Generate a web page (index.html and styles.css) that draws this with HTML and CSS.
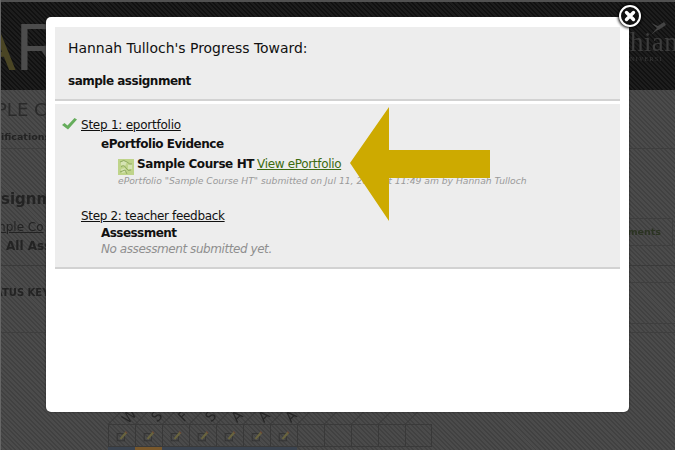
FILE: index.html
```html
<!DOCTYPE html>
<html lang="en">
<head>
<meta charset="utf-8">
<title>Progress</title>
<link rel="stylesheet" href="styles.css">
</head>
<body>
<div class="page">
  <header class="banner">
    <div class="logo-left"><span class="logo-a">A</span><span>R</span></div>
    <div class="logo-right">
      <svg class="bird" width="16" height="16" viewBox="0 0 16 16"><path d="M1 15 L7 8 L1 3 L8 6 L14 2 L16 5 L10 9 L6 11 Z" fill="#444"/></svg>
      <div class="logo-name">hian</div>
      <div class="logo-sub">NIVERSI</div>
    </div>
  </header>
  <main class="content">
    <div class="course-title">PLE C</div>
    <div class="notif">ifications</div>
    <div class="assign">signm</div>
    <div class="assign-row">
      <div>
        <div class="link-bg">mple Co</div>
        <div class="all">All Ass</div>
      </div>
      <div class="comments"><span>mments</span></div>
    </div>
    <div class="status-row">
      <div class="status">ATUS KEY</div>
      <div class="status-side"></div>
    </div>
    <div class="grid-wrap">
      <div class="hcell"><span>W</span></div>
      <div class="hcell"><span>S</span></div>
      <div class="hcell"><span>F</span></div>
      <div class="hcell"><span>S</span></div>
      <div class="hcell"><span>A</span></div>
      <div class="hcell"><span>A</span></div>
      <div class="hcell"><span>A</span></div>
      <div class="hcell"></div>
      <div class="hcell"></div>
      <div class="hcell"></div>
      <div class="hcell"></div>
      <div class="hcell"></div>
      <div class="cell"><svg class="pencil" viewBox="0 0 10 10"><use href="#p"/></svg></div>
      <div class="cell"><svg class="pencil" viewBox="0 0 10 10"><use href="#p"/></svg></div>
      <div class="cell"><svg class="pencil" viewBox="0 0 10 10"><use href="#p"/></svg></div>
      <div class="cell"><svg class="pencil" viewBox="0 0 10 10"><use href="#p"/></svg></div>
      <div class="cell"><svg class="pencil" viewBox="0 0 10 10"><use href="#p"/></svg></div>
      <div class="cell"><svg class="pencil" viewBox="0 0 10 10"><use href="#p"/></svg></div>
      <div class="cell"><svg class="pencil" viewBox="0 0 10 10"><use href="#p"/></svg></div>
      <div class="cell"></div>
      <div class="cell"></div>
      <div class="cell"></div>
      <div class="cell"></div>
      <div class="cell"></div>
      <div class="bar"></div><div class="bar orange"></div><div class="bar"></div><div class="bar"></div><div class="bar"></div><div class="bar"></div><div class="bar"></div>
    </div>
  </main>
  <svg class="defs" width="0" height="0"><defs><g id="p"><rect x="1" y="3" width="6" height="6" fill="none" stroke="#333" stroke-width=".8"/><path d="M3 7 L8 1 L9.5 2.5 L4.5 8 Z" fill="#69643f"/><path d="M7.5 1.5 L8 1 L9.5 2.5 L9 3 Z" fill="#6b3a30"/></g></defs></svg>
</div>

<div class="modal">
  <section class="panel head">
    <h1>Hannah Tulloch's Progress Toward:</h1>
    <h2>sample assignment</h2>
  </section>
  <section class="panel steps">
    <div class="step">
      <svg class="check" width="17" height="13" viewBox="0 0 17 13"><path d="M1 8 L3.5 6 L6.5 8.5 L13.5 1 L16 2.5 L7 12.5 Z" fill="#66ad5c"/></svg>
      <a class="step-link">Step 1: eportfolio</a>
    </div>
    <div class="sub">ePortfolio Evidence</div>
    <div class="evidence">
      <svg class="thumb" width="16" height="16" viewBox="0 0 16 16">
        <rect width="16" height="16" fill="#bfd48a"/>
        <path d="M3 3 Q6 1 9 3 L7 7 L3 6 Z M10 6 L14 5 L14 10 L10 10 Z M3 10 L7 9 L8 13 L4 14 Z" fill="#d6e3b4"/>
        <path d="M2 3 Q6 0 9 3 T14 5 M3 8 Q6 5 8 9 T13 11 M2 13 L7 11 L9 15" fill="none" stroke="#8fa962" stroke-width="1"/>
      </svg>
      <strong>Sample Course HT</strong>
      <a class="view">View ePortfolio</a>
    </div>
    <div class="meta">ePortfolio "Sample Course HT" submitted on Jul 11, 2017 at 11:49 am by Hannah Tulloch</div>
    <div class="step step-two"><a class="step-link">Step 2: teacher feedback</a></div>
    <div class="sub sub-two">Assessment</div>
    <div class="none-yet">No assessment submitted yet.</div>
  </section>
</div>

<svg class="arrow" width="140" height="114" viewBox="0 0 140 114"><path d="M0 56 L39 0 L39 43 L140 43 L140 71 L39 71 L39 114 Z" fill="#cdaa00"/></svg>

<button class="close" aria-label="Close">
  <svg width="14" height="14" viewBox="0 0 14 14"><path d="M3.5 3.5 L10.5 10.5 M10.5 3.5 L3.5 10.5" stroke="#fff" stroke-width="3.4" stroke-linecap="round"/></svg>
</button>
</body>
</html>
```

FILE: styles.css
```css
* { box-sizing: border-box; }
html, body { margin: 0; padding: 0; }
body {
  width: 675px;
  height: 450px;
  overflow: hidden;
  position: relative;
  background: #474747;
  font-family: "DejaVu Sans", Verdana, sans-serif;
}
.page {
  height: 450px;
  border-left: 1px solid #666;
  background:
    repeating-linear-gradient(45deg, #414141 0, #414141 1.4px, #4b4b4b 1.4px, #4b4b4b 3.2px);
  overflow: hidden;
  filter: blur(.4px);
}
.banner {
  height: 90px;
  border-top: 2px solid #505050;
  background:
    repeating-linear-gradient(45deg, #111 0, #111 1.4px, #1d1d1d 1.4px, #1d1d1d 3.2px);
  display: flex;
  justify-content: space-between;
}
.logo-left {
  font: 67px/1 "Liberation Sans", sans-serif;
  color: #4c4c4c;
  padding-top: 11px;
  margin-left: -30px;
  white-space: nowrap;
}
.logo-a { color: #4a4524; }
.logo-right {
  width: 45px;
  padding-top: 18px;
  overflow: hidden;
}
.bird { display: block; margin-left: 20px; margin-bottom: -6px; }
.logo-name { font: 27px/24px "Liberation Serif", serif; color: #3c3c3c; letter-spacing: .4px; }
.logo-sub { font: 6px/10px "Liberation Serif", serif; color: #3c3c3c; letter-spacing: 1.3px; white-space: nowrap; }
.content { color: #232323; font-weight: 700; }
.course-title { font-size: 18px; font-weight: 400; line-height: 22px; padding-top: 9px; color: #2a2a2a; margin-left: -5px; }
.notif { font-size: 9.5px; line-height: 12px; padding: 10px 0 5px; border-bottom: 1px solid #3e3e3e; }
.assign { font-size: 15px; line-height: 18px; padding-top: 41px; }
.assign-row { display: flex; justify-content: space-between; align-items: flex-start; }
.link-bg { font-size: 12px; line-height: 14px; padding-top: 12px; margin-left: -7px; font-weight: 400; text-decoration: underline; }
.all { font-size: 12px; line-height: 14px; padding: 5px 0 0 5px; }
.comments {
  font-size: 9.5px;
  color: #2b3322;
  width: 46px;
  height: 28px;
  margin: 10px 2px 0 0;
  line-height: 26px;
  border: 1px solid #3e3e3e;
  border-left: 0;
  display: flex;
  justify-content: flex-end;
  padding-right: 11px;
  white-space: nowrap;
}
.comments span { flex: none; }
.status-row {
  display: flex;
  justify-content: space-between;
  height: 68px;
  margin-top: 12px;
  border-top: 1px solid #3a3a3a;
  border-bottom: 1px solid #3e3e3e;
}
.status { font-size: 10px; line-height: 12px; padding-top: 21px; margin-left: -6px; }
.status-side { width: 46px; height: 42px; margin-top: 16px; border-top: 1px solid #3e3e3e; border-bottom: 1px solid #3e3e3e; }
.grid-wrap {
  display: grid;
  grid-template-columns: repeat(12, 27px);
  grid-template-rows: 13px 23px 5px;
  margin: 78px 0 0 107px;
  width: 324px;
}
.hcell {
  border-left: 1px solid #373737;
  transform-origin: bottom left;
  transform: skewX(-45deg);
  font-size: 14px;
  font-weight: 400;
  line-height: 14px;
  color: #262626;
  display: flex;
  justify-content: center;
}
.hcell span { display: block; margin-top: -2px; transform: skewX(45deg) rotate(-45deg); }
.cell {
  border-left: 1px solid #393939;
  border-top: 1px solid #3a3a3a;
  border-bottom: 1px solid #3a3a3a;
  display: flex;
  justify-content: center;
  align-items: center;
}
.cell:nth-child(24) { border-right: 1px solid #393939; }
.pencil { width: 12px; height: 12px; }
.bar { background: #3b4450; }
.bar.orange { background: #79582b; }
.defs { position: absolute; }

.modal {
  position: absolute;
  left: 46px;
  top: 17px;
  width: 583px;
  height: 395px;
  background: #fff;
  border-radius: 5px;
  padding: 10px 9px;
  box-shadow: 0 0 2px #222;
  color: #111;
}
.panel { background: #ededed; border-bottom: 2px solid #d2d2d2; }
.head { height: 74px; padding: 12px 13px 0; }
h1 { margin: 0; font-size: 13.95px; font-weight: 400; line-height: 18px; }
h2 { margin: 16px 0 0; font-size: 12px; font-weight: 700; line-height: 16px; letter-spacing: -.5px; }
.steps { margin-top: 3px; height: 165px; padding: 13px 0 0 26px; font-size: 12px; }
.step { display: flex; line-height: 16px; position: relative; letter-spacing: -.24px; }
.check { position: absolute; left: -20px; top: 0; }
.step-link { text-decoration: underline; color: #111; }
.sub { font-weight: 700; line-height: 16px; margin: 3px 0 0 20px; letter-spacing: -.47px; }
.evidence { display: flex; align-items: flex-start; line-height: 16px; margin: 4px 0 0 37px; letter-spacing: -.4px; }
.thumb { margin: 3px 3px -3px 0; flex: none; }
.view { margin-left: 3px; text-decoration: underline; color: #3c6a10; letter-spacing: -.33px; }
.meta { font-size: 9.2px; font-style: italic; color: #9a9a9a; line-height: 12px; margin: 3px 0 0 37px; white-space: nowrap; }
.step-two { margin-top: 21px; letter-spacing: -.33px; }
.sub-two { margin-top: 1px; letter-spacing: -.55px; }
.none-yet { font-style: italic; color: #8f8f8f; line-height: 16px; margin: 0 0 0 20px; letter-spacing: -.43px; }

.arrow { position: absolute; left: 350px; top: 107px; }
.close {
  position: absolute;
  left: 619px;
  top: 5px;
  width: 22px;
  height: 22px;
  padding: 0;
  border: 2.5px solid #fff;
  border-radius: 50%;
  background: #111;
  box-shadow: 0 0 3px 1px #000;
  display: flex;
  align-items: center;
  justify-content: center;
}
```
